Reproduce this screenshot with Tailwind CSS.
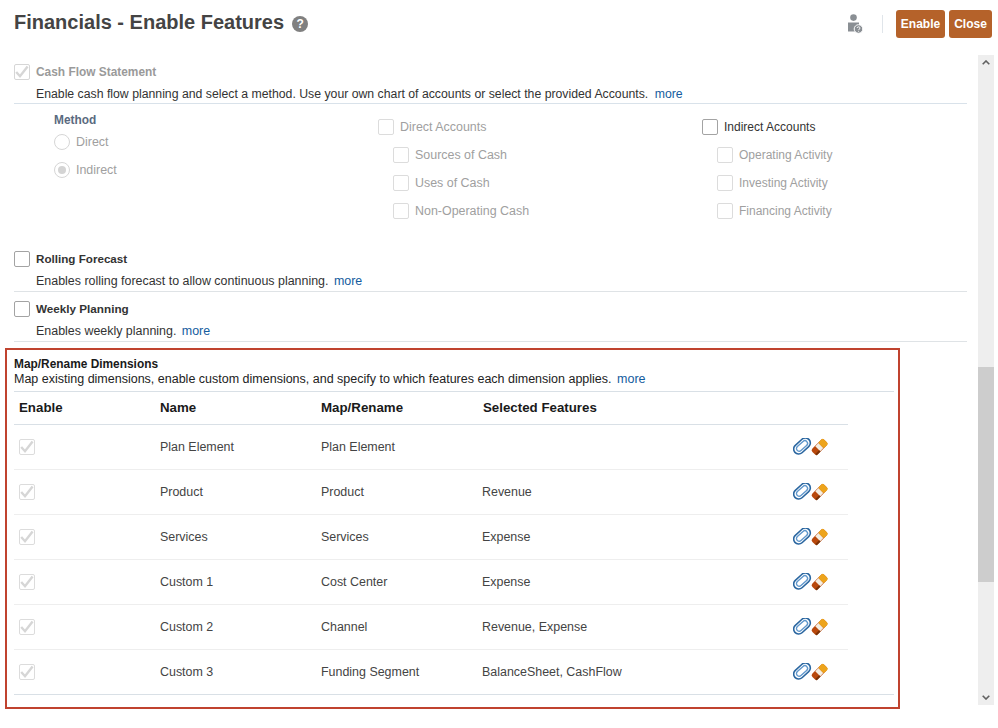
<!DOCTYPE html>
<html lang="en">
  <head>
    <meta charset="UTF-8" />
    <meta name="viewport" content="width=device-width, initial-scale=1.0" />
    <title>Financials - Enable Features</title>
    <script src="https://cdn.jsdelivr.net/npm/@tailwindcss/browser@4"></script>
  </head>
  <body class="bg-white h-[728px] w-[998px] overflow-hidden font-['Liberation_Sans',Arial,sans-serif] text-[12.45px] text-[#333]">
    <svg width="0" height="0" class="absolute">
      <symbol id="chk" viewBox="0 0 14 14">
        <path d="M1.2 7l3.8 4.2L12.6 1.6" fill="none" stroke="#d6d6d6" stroke-width="2.4" />
      </symbol>
      <symbol id="actions" viewBox="0 0 36 18">
        <g transform="rotate(-42 9 8)" fill="none">
          <rect x="-0.5" y="3" width="19" height="10" rx="5" stroke="#2a66a0" stroke-width="1.6" />
          <rect x="2.5" y="5.3" width="13" height="5.4" rx="2.7" stroke="#5f97cc" stroke-width="1.4" />
        </g>
        <g transform="rotate(-45 26.5 9)">
          <rect x="18" y="5" width="17" height="8" rx="2.5" fill="#b9480c" />
          <rect x="24" y="5.5" width="4.5" height="7" fill="#f4eee2" />
          <rect x="28.5" y="5" width="6.5" height="8" rx="1.5" fill="#eda41c" />
          <rect x="18.5" y="11" width="5.5" height="2" fill="#7a3208" />
        </g>
      </symbol>
    </svg>

    <header class="h-[55px] flex items-center pl-[14px] pr-[6px] pb-[9px] pt-[1px]">
      <h1 class="text-[20px] leading-[24px] font-bold text-[#444] mb-[3px]">Financials - Enable Features</h1>
      <span class="ml-2 w-4 h-4 rounded-full bg-[#808080] text-white text-[12px] leading-4 font-bold text-center">?</span>
      <svg class="ml-auto" width="16" height="20" viewBox="0 0 16 20">
        <circle cx="6.5" cy="3.6" r="3.3" fill="#8a8f94" />
        <path d="M1 8.5h11v9H1z" fill="#8a8f94" />
        <circle cx="11.5" cy="15" r="4.3" fill="#8a8f94" stroke="#fff" stroke-width="1" />
        <path d="M10.1 14c.2-1.6 3-1.5 2.9.1 0 1-1.4 1-1.4 2M11.6 16.9v.8" fill="none" stroke="#fff" stroke-width="1" />
      </svg>
      <div class="w-px h-[18px] bg-[#e0e5ea] ml-[19px] mr-[13px]"></div>
      <button class="w-[49px] h-[28px] bg-[#b5622a] rounded-[3px] text-white text-[12px] font-bold">Enable</button>
      <button class="w-[43px] h-[28px] ml-1 bg-[#b5622a] rounded-[3px] text-white text-[12px] font-bold">Close</button>
    </header>

    <div class="flex h-[650px]">
      <main class="w-[978px]">
        <div class="pl-[14px] pr-[11px]">
          <!-- cash flow -->
          <div class="h-[49px] pt-[9px] border-b border-[#d9e2ea]">
            <div class="flex items-center gap-[6px] h-4">
              <span class="w-4 h-4 border border-[#d6d6d6] rounded-[2px]"><svg class="w-[14px] h-[14px]"><use href="#chk" /></svg></span>
              <b class="mt-px text-[11.9px] text-[#9a9a9a]">Cash Flow Statement</b>
            </div>
            <p class="ml-[22px] mt-[7px] leading-[15px] text-[12.27px]">Enable cash flow planning and select a method. Use your own chart of accounts or select the provided Accounts. <a class="ml-[3px] text-[#145c9e]">more</a></p>
          </div>
          <div class="h-[147px] flex pt-[9px] text-[#a0a0a0]">
            <div class="w-[364px] pl-[40px]">
              <b class="block leading-[15px] text-[11.9px] text-[#5a6a80]">Method</b>
              <div class="flex items-center gap-[6px] h-4 mt-[6px]">
                <span class="w-4 h-4 rounded-full border border-[#d6d6d6]"></span>Direct
              </div>
              <div class="flex items-center gap-[6px] h-4 mt-[12px]">
                <span class="w-4 h-4 rounded-full border border-[#d6d6d6] flex items-center justify-center"><span class="w-2 h-2 rounded-full bg-[#d4d4d4]"></span></span>Indirect
              </div>
            </div>
            <div class="w-[324px] flex flex-col gap-3 pt-[6px]">
              <div class="flex items-center gap-[6px] h-4"><span class="w-4 h-4 border border-[#dcdcdc] rounded-[2px]"></span>Direct Accounts</div>
              <div class="flex items-center gap-[6px] h-4 ml-[15px]"><span class="w-4 h-4 border border-[#dcdcdc] rounded-[2px]"></span>Sources of Cash</div>
              <div class="flex items-center gap-[6px] h-4 ml-[15px]"><span class="w-4 h-4 border border-[#dcdcdc] rounded-[2px]"></span>Uses of Cash</div>
              <div class="flex items-center gap-[6px] h-4 ml-[15px]"><span class="w-4 h-4 border border-[#dcdcdc] rounded-[2px]"></span>Non-Operating Cash</div>
            </div>
            <div class="flex flex-col gap-3 pt-[6px]">
              <div class="flex items-center gap-[6px] h-4 text-[#333] text-[12px]"><span class="w-4 h-4 border border-[#a3a3a3] rounded-[2px]"></span>Indirect Accounts</div>
              <div class="flex items-center gap-[6px] h-4 ml-[15px] text-[12px]"><span class="w-4 h-4 border border-[#dcdcdc] rounded-[2px]"></span>Operating Activity</div>
              <div class="flex items-center gap-[6px] h-4 ml-[15px] text-[12px]"><span class="w-4 h-4 border border-[#dcdcdc] rounded-[2px]"></span>Investing Activity</div>
              <div class="flex items-center gap-[6px] h-4 ml-[15px] text-[12px]"><span class="w-4 h-4 border border-[#dcdcdc] rounded-[2px]"></span>Financing Activity</div>
            </div>
          </div>
          <!-- rolling forecast -->
          <div class="h-[41px] border-b border-[#dfe3e6]">
            <div class="flex items-center gap-[6px] h-4">
              <span class="w-4 h-4 border border-[#a3a3a3] rounded-[2px]"></span>
              <b class="text-[11.65px]">Rolling Forecast</b>
            </div>
            <p class="ml-[22px] mt-[7px] leading-[15px]">Enables rolling forecast to allow continuous planning. <a class="ml-[2px] text-[#145c9e]">more</a></p>
          </div>
          <div class="h-[50px] pt-[9px] border-b border-[#dfe3e6]">
            <div class="flex items-center gap-[6px] h-4">
              <span class="w-4 h-4 border border-[#a3a3a3] rounded-[2px]"></span>
              <b class="text-[11.7px]">Weekly Planning</b>
            </div>
            <p class="ml-[22px] mt-[7px] leading-[15px]">Enables weekly planning. <a class="ml-[2px] text-[#145c9e]">more</a></p>
          </div>
        </div>

        <!-- map/rename box -->
        <section class="ml-[5px] mt-[6px] w-[895px] h-[361px] border-2 border-[#c0432f] pl-[7px] pr-[4px] pt-[7px]">
          <div class="h-[35px] border-b border-[#d9e0e6]">
            <h2 class="font-bold text-[11.9px] text-[#1a1a1a] leading-[15px]">Map/Rename Dimensions</h2>
            <p class="leading-[15px] text-[12.5px] text-[#222]">Map existing dimensions, enable custom dimensions, and specify to which features each dimension applies. <a class="ml-[2px] text-[#145c9e]">more</a></p>
          </div>
          <table class="table-fixed w-[834px] border-collapse text-[#444]">
            <thead>
              <tr class="h-[32px] border-b border-[#d9e0e6] text-[13.3px] font-bold text-[#1a1a1a] text-left">
                <th class="w-[146px] pl-[5px]">Enable</th>
                <th class="w-[161px]">Name</th>
                <th class="w-[161px]">Map/Rename</th>
                <th class="pl-px">Selected Features</th>
                <th class="w-[56px]"></th>
              </tr>
            </thead>
            <tbody class="leading-4">
              <tr class="h-[45px] border-b border-[#eeeeee]">
                <td class="pl-[5px]"><span class="block w-4 h-4 border border-[#dcdcdc] rounded-[2px]"><svg class="w-[14px] h-[14px]"><use href="#chk" /></svg></span></td>
                <td>Plan Element</td><td>Plan Element</td><td></td>
                <td class="pl-px"><svg class="w-9 h-[18px]"><use href="#actions" /></svg></td>
              </tr>
              <tr class="h-[45px] border-b border-[#eeeeee]">
                <td class="pl-[5px]"><span class="block w-4 h-4 border border-[#dcdcdc] rounded-[2px]"><svg class="w-[14px] h-[14px]"><use href="#chk" /></svg></span></td>
                <td>Product</td><td>Product</td><td>Revenue</td>
                <td class="pl-px"><svg class="w-9 h-[18px]"><use href="#actions" /></svg></td>
              </tr>
              <tr class="h-[45px] border-b border-[#eeeeee]">
                <td class="pl-[5px]"><span class="block w-4 h-4 border border-[#dcdcdc] rounded-[2px]"><svg class="w-[14px] h-[14px]"><use href="#chk" /></svg></span></td>
                <td>Services</td><td>Services</td><td>Expense</td>
                <td class="pl-px"><svg class="w-9 h-[18px]"><use href="#actions" /></svg></td>
              </tr>
              <tr class="h-[45px] border-b border-[#eeeeee]">
                <td class="pl-[5px]"><span class="block w-4 h-4 border border-[#dcdcdc] rounded-[2px]"><svg class="w-[14px] h-[14px]"><use href="#chk" /></svg></span></td>
                <td>Custom 1</td><td>Cost Center</td><td>Expense</td>
                <td class="pl-px"><svg class="w-9 h-[18px]"><use href="#actions" /></svg></td>
              </tr>
              <tr class="h-[45px] border-b border-[#eeeeee]">
                <td class="pl-[5px]"><span class="block w-4 h-4 border border-[#dcdcdc] rounded-[2px]"><svg class="w-[14px] h-[14px]"><use href="#chk" /></svg></span></td>
                <td>Custom 2</td><td>Channel</td><td>Revenue, Expense</td>
                <td class="pl-px"><svg class="w-9 h-[18px]"><use href="#actions" /></svg></td>
              </tr>
              <tr class="h-[45px]">
                <td class="pl-[5px]"><span class="block w-4 h-4 border border-[#dcdcdc] rounded-[2px]"><svg class="w-[14px] h-[14px]"><use href="#chk" /></svg></span></td>
                <td>Custom 3</td><td>Funding Segment</td><td>BalanceSheet, CashFlow</td>
                <td class="pl-px"><svg class="w-9 h-[18px]"><use href="#actions" /></svg></td>
              </tr>
            </tbody>
          </table>
          <div class="border-t border-[#d9e0e6] h-px"></div>
        </section>
      </main>

      <!-- scrollbar -->
      <div class="w-[16px] h-[650px] bg-[#eeeeee] flex flex-col items-center justify-between relative">
        <svg class="mt-[5px]" width="8" height="5" viewBox="0 0 8 5"><path d="M.7 4.3L4 1l3.3 3.3" fill="none" stroke="#606060" stroke-width="1.6" /></svg>
        <div class="absolute top-[312px] w-full h-[215px] bg-[#cdcdcd]"></div>
        <svg class="mb-[5px]" width="8" height="5" viewBox="0 0 8 5"><path d="M.7.7L4 4l3.3-3.3" fill="none" stroke="#606060" stroke-width="1.6" /></svg>
      </div>
    </div>
  </body>
</html>
